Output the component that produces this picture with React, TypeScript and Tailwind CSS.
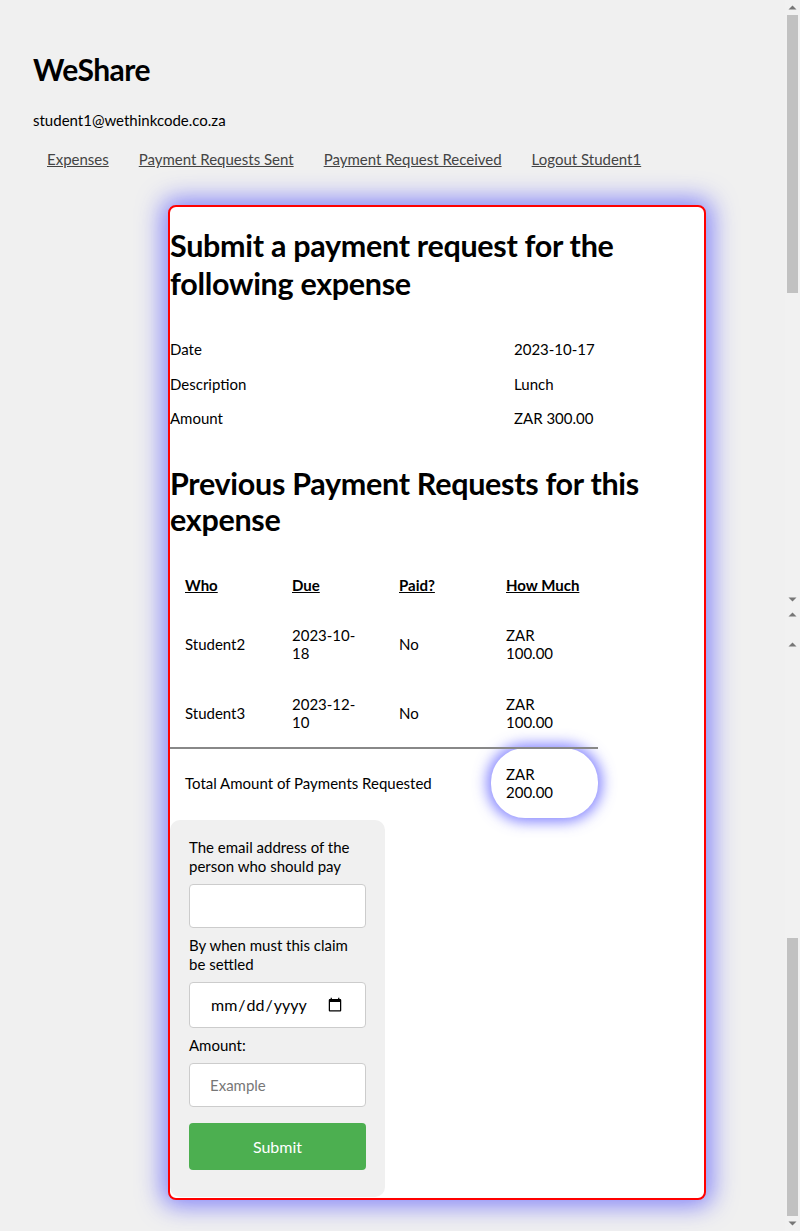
import React from "react";

const HEAD = "font-['Lato',sans-serif]";

const expense = [
    { label: "Date", value: "2023-10-17" },
    { label: "Description", value: "Lunch" },
    { label: "Amount", value: "ZAR 300.00" },
];

const requests = [
    { who: "Student2", due: "2023-10-18", paid: "No", amount: "ZAR 100.00" },
    { who: "Student3", due: "2023-12-10", paid: "No", amount: "ZAR 100.00" },
];

function Arrow({ up }: { up?: boolean }) {
    return (
        <svg width="15" height="15" viewBox="0 0 15 15" className="shrink-0">
            <path d={up ? "M3.5 9.5 L7.5 5.5 L11.5 9.5 Z" : "M3.5 5.5 L7.5 9.5 L11.5 5.5 Z"} fill="#777" />
        </svg>
    );
}

// screenshot was stitched from two viewports, so the scrollbar shows twice
function ScrollBar() {
    return (
        <div className="w-[15px] shrink-0 flex flex-col bg-[#f1f1f1]">
            <Arrow up />
            <div className="mx-[2px] h-[278px] bg-[#c1c1c1]" />
            <div className="flex-1" />
            <Arrow />
            <Arrow up />
            <div className="h-[15px]" />
            <Arrow up />
            <div className="h-[286px]" />
            <div className="mx-[2px] h-[278px] bg-[#c1c1c1]" />
            <Arrow />
        </div>
    );
}

export default function App() {
    return (
        <div className="flex h-[1231px] overflow-hidden bg-[#f0f0f0] text-black font-['Lato',sans-serif]">
            <div className="flex-1 pl-[33px] pt-[47px]">
                <h1 className={`${HEAD} text-[30px] font-bold leading-[45px] tracking-[-0.5px]`}>WeShare</h1>

                <div className="mt-[18px] text-[15px] leading-[20px]">student1@wethinkcode.co.za</div>

                <nav className="mt-[19px] ml-[14px] flex gap-[30px] text-[15px] leading-[20px] text-[#444]">
                    <a className="underline">Expenses</a>
                    <a className="underline">Payment Requests Sent</a>
                    <a className="underline">Payment Request Received</a>
                    <a className="underline">Logout Student1</a>
                </nav>

                {/* Card */}
                <div className="mt-[36px] ml-[135px] w-[538px] rounded-[8px] border-2 border-[#ff0000] bg-white shadow-[0_0_24px_6px_rgba(60,60,255,0.6)]">
                    <h2 className={`${HEAD} mt-[19px] text-[30.5px] font-bold leading-[38px] tracking-[-0.3px]`}>
                        Submit a payment request for the following expense
                    </h2>

                    <div className="mt-[30px] text-[15px]">
                        {expense.map((row) => (
                            <div key={row.label} className="flex h-[34.5px] items-center">
                                <div className="w-[344px]">{row.label}</div>
                                <div>{row.value}</div>
                            </div>
                        ))}
                    </div>

                    <h2 className={`${HEAD} mt-[29px] text-[30.5px] font-bold leading-[36px] tracking-[-0.3px]`}>
                        Previous Payment Requests for this expense
                    </h2>

                    <table className="mt-[23px] w-[428px] border-collapse text-[15px] leading-[18px]">
                        <thead>
                            <tr className="h-[50px]">
                                <th className="w-[107px] pl-[15px] text-left font-bold underline">Who</th>
                                <th className="w-[107px] pl-[15px] text-left font-bold underline">Due</th>
                                <th className="w-[107px] pl-[15px] text-left font-bold underline">Paid?</th>
                                <th className="w-[107px] pl-[15px] text-left font-bold underline">How Much</th>
                            </tr>
                        </thead>
                        <tbody>
                            {requests.map((r) => (
                                <tr key={r.who} className="h-[69px]">
                                    <td className="pl-[15px]">{r.who}</td>
                                    <td className="pl-[15px] pr-[20px] break-all">{r.due}</td>
                                    <td className="pl-[15px]">{r.paid}</td>
                                    <td className="pl-[15px] pr-[40px]">{r.amount}</td>
                                </tr>
                            ))}
                            <tr className="h-[70px] border-t-2 border-[#888]">
                                <td colSpan={3} className="pl-[15px]">Total Amount of Payments Requested</td>
                                <td className="pl-[15px] pr-[30px] rounded-[34px] bg-white shadow-[0_0_14px_4px_rgba(80,80,255,0.7)]">
                                    ZAR 200.00
                                </td>
                            </tr>
                        </tbody>
                    </table>

                    {/* Form */}
                    <form className="mt-[2px] mb-px w-[215px] rounded-[10px] bg-[#f0f0f0] px-[19px] pt-[18px] pb-[27px] text-[15px] leading-[19px]">
                        <label className="block">The email address of the person who should pay</label>
                        <input type="email" className="mt-[8px] mb-[8px] block h-[44px] w-[177px] rounded-[4px] border border-[#ccc] bg-white px-[20px]" />
                        <label className="block">By when must this claim be settled</label>
                        <input type="date" className="mt-[8px] mb-[8px] block h-[46px] w-[177px] rounded-[4px] border border-[#ccc] bg-white px-[20px] text-[16px]" />
                        <label className="block">Amount:</label>
                        <input
                            type="text"
                            placeholder="Example"
                            className="mt-[8px] block h-[44px] w-[177px] rounded-[4px] border border-[#ccc] bg-white px-[20px] placeholder:text-[#777]"
                        />
                        <button type="button" className="mt-[16px] block h-[47px] w-[177px] rounded-[4px] bg-[#4caf50] text-white text-[16px]">
                            Submit
                        </button>
                    </form>
                </div>
            </div>
            <ScrollBar />
        </div>
    );
}
